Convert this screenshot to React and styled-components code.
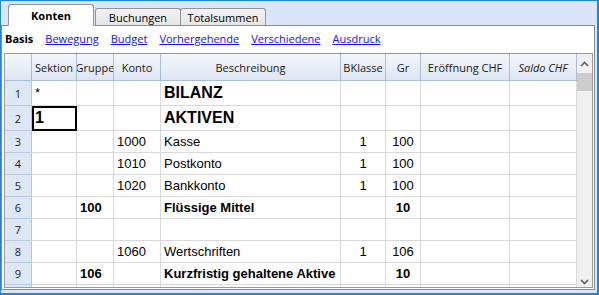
import React from "react"
import styled, { createGlobalStyle } from "styled-components"

const GlobalStyle = createGlobalStyle`
  body {
    margin: 0;
    font-family: "Open Sans", sans-serif;
  }
`

const UI = `"Open Sans", "Noto Sans", sans-serif`
const CELL = `"Liberation Sans", Arial, sans-serif`
const COLS = "27px 45px 37px 47px 180px 45px 35px 89px 67px"

const Frame = styled.div`
  width: 599px;
  height: 295px;
  box-sizing: border-box;
  border-style: solid;
  border-color: #1b86e2;
  border-width: 1px 2px 2px 1px;
  background: #dae6f8;
  padding: 0 1px 3px 0;
  display: flex;
  flex-direction: column;
  overflow: hidden;
`

const TabStrip = styled.div`
  height: 24px;
  display: flex;
  align-items: flex-end;
  padding-left: 7px;
  flex-shrink: 0;
`

const Tab = styled.div`
  box-sizing: border-box;
  width: 86px;
  height: ${p => (p.$active ? "22px" : "17px")};
  margin-left: ${p => p.$gap}px;
  margin-bottom: ${p => (p.$active ? "-1px" : "0")};
  border: 1px solid #8f939c;
  border-bottom: ${p => (p.$active ? "1px solid #fff" : "none")};
  border-radius: 3px 3px 0 0;
  background: ${p =>
    p.$active
      ? "linear-gradient(#fdfdfe, #ffffff)"
      : "linear-gradient(#f3f3f3, #e6e6e6)"};
  display: flex;
  align-items: center;
  justify-content: center;
  padding-top: ${p => (p.$active ? "0" : "1px")};
  font-family: ${UI};
  font-size: 11px;
  font-weight: ${p => (p.$active ? 700 : 400)};
  color: #000;
  position: relative;
  z-index: ${p => (p.$active ? 2 : 1)};
`

const Panel = styled.div`
  flex: 1;
  box-sizing: border-box;
  margin-right: 1px;
  border: 1px solid #8c8c8c;
  background: #fff;
  padding: 0 1px 1px 2px;
  display: flex;
  flex-direction: column;
  min-height: 0;
`

const NavBar = styled.div`
  height: 27px;
  flex-shrink: 0;
  display: flex;
  align-items: center;
  gap: 12px;
  padding-left: 1px;
  padding-bottom: 2px;
  box-sizing: border-box;
  font-family: ${UI};
  font-size: 11px;
`

const NavCurrent = styled.span`
  font-weight: 700;
  color: #000;
`

const NavLink = styled.a`
  color: #1010ff;
  text-decoration: underline;
  cursor: pointer;
`

const GridBox = styled.div`
  flex: 1;
  min-height: 0;
  border: 1px solid #9a9a9a;
  display: flex;
  overflow: hidden;
`

const Sheet = styled.div`
  width: 572px;
  display: flex;
  flex-direction: column;
`

const Row = styled.div`
  display: grid;
  grid-template-columns: ${COLS};
  height: ${p => p.$h}px;
  flex-shrink: 0;
`

const HeadCell = styled.div`
  box-sizing: border-box;
  border-right: 1px solid #aabdd8;
  border-bottom: 1px solid #aabdd8;
  background: linear-gradient(#f3f6fb, #dde6f3);
  font-family: ${UI};
  font-size: 11px;
  font-style: ${p => (p.$italic ? "italic" : "normal")};
  color: #1a1a1a;
  display: flex;
  align-items: center;
  justify-content: center;
  white-space: nowrap;
  overflow: hidden;
`

const NumCell = styled.div`
  box-sizing: border-box;
  border-right: 1px solid #b3c6e0;
  border-bottom: 1px solid #b9cbe4;
  background: #dde7f5;
  font-family: ${UI};
  font-size: 11px;
  color: #222;
  display: flex;
  align-items: center;
  justify-content: center;
`

const Cell = styled.div`
  box-sizing: border-box;
  border-right: 1px solid #d9d9d9;
  border-bottom: 1px solid #d9d9d9;
  font-family: ${CELL};
  font-size: ${p => (p.$big ? "16px" : "13px")};
  font-weight: ${p => (p.$bold || p.$big ? 700 : 400)};
  color: #000;
  display: flex;
  align-items: ${p => (p.$top ? "flex-start" : "center")};
  padding-top: ${p => (p.$top ? "4px" : "0")};
  justify-content: ${p => (p.$center ? "center" : "flex-start")};
  padding-left: ${p => (p.$center ? "0" : "3px")};
  white-space: nowrap;
  overflow: hidden;
  outline: ${p => (p.$selected ? "2px solid #000" : "none")};
  outline-offset: -2px;
`

const ScrollBar = styled.div`
  width: 16px;
  background: #f0f0f0;
  display: flex;
  flex-direction: column;
  align-items: center;
  justify-content: space-between;
  padding: 7px 0 2px;
`

const Thumb = styled.div`
  width: 15px;
  height: 18px;
  background: #cdcdcd;
  margin-top: 6px;
`

const Spacer = styled.div`
  flex: 1;
`

const Chevron = ({ down }) => (
  <svg width="9" height="6" viewBox="0 0 9 6">
    <polyline
      points={down ? "1,1 4.5,4.5 8,1" : "1,5 4.5,1.5 8,5"}
      fill="none"
      stroke="#606060"
      strokeWidth="1.6"
    />
  </svg>
)

const headers = [
  { t: "" },
  { t: "Sektion" },
  { t: "Gruppe" },
  { t: "Konto" },
  { t: "Beschreibung" },
  { t: "BKlasse" },
  { t: "Gr" },
  { t: "Eröffnung CHF" },
  { t: "Saldo CHF", italic: true },
]

// the last row is only a sliver at the bottom edge, its number stays hidden
const rows = [
  { n: 1, h: 25, sek: "*", top: true, desc: "BILANZ", big: true },
  { n: 2, h: 25, sek: "1", selected: true, desc: "AKTIVEN", big: true },
  { n: 3, h: 22, konto: "1000", desc: "Kasse", bk: "1", gr: "100" },
  { n: 4, h: 22, konto: "1010", desc: "Postkonto", bk: "1", gr: "100" },
  { n: 5, h: 22, konto: "1020", desc: "Bankkonto", bk: "1", gr: "100" },
  { n: 6, h: 22, grp: "100", desc: "Flüssige Mittel", gr: "10", bold: true },
  { n: 7, h: 22 },
  { n: 8, h: 22, konto: "1060", desc: "Wertschriften", bk: "1", gr: "106" },
  { n: 9, h: 22, grp: "106", desc: "Kurzfristig gehaltene Aktive", gr: "10", bold: true },
  { n: 10, h: 22, hideNum: true },
]

const navLinks = ["Bewegung", "Budget", "Vorhergehende", "Verschiedene", "Ausdruck"]

const App = () => (
  <>
    <GlobalStyle />
    <Frame>
      <TabStrip>
        <Tab $active $gap={0}>Konten</Tab>
        <Tab $gap={1}>Buchungen</Tab>
        <Tab $gap={-1}>Totalsummen</Tab>
      </TabStrip>
      <Panel>
        <NavBar>
          <NavCurrent>Basis</NavCurrent>
          {navLinks.map(l => (
            <NavLink key={l}>{l}</NavLink>
          ))}
        </NavBar>
        <GridBox>
          <Sheet>
            <Row $h={27}>
              {headers.map((h, i) => (
                <HeadCell key={i} $italic={h.italic}>{h.t}</HeadCell>
              ))}
            </Row>
            {rows.map(r => (
              <Row key={r.n} $h={r.h}>
                <NumCell>{r.hideNum ? "" : r.n}</NumCell>
                <Cell $top={r.top} $big={r.selected} $selected={r.selected}>{r.sek}</Cell>
                <Cell $bold={r.bold}>{r.grp}</Cell>
                <Cell>{r.konto}</Cell>
                <Cell $big={r.big} $bold={r.bold}>{r.desc}</Cell>
                <Cell $center>{r.bk}</Cell>
                <Cell $center $bold={r.bold}>{r.gr}</Cell>
                <Cell />
                <Cell />
              </Row>
            ))}
          </Sheet>
          <ScrollBar>
            <Chevron />
            <Thumb />
            <Spacer />
            <Chevron down />
          </ScrollBar>
        </GridBox>
      </Panel>
    </Frame>
  </>
)

export default App
